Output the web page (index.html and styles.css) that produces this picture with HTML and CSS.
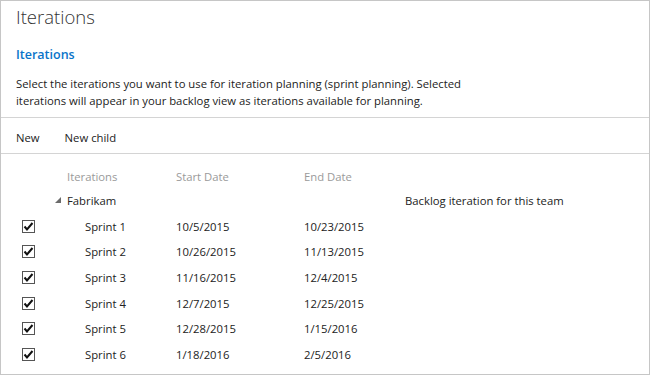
FILE: index.html
```html
<!DOCTYPE html>
<html lang="en">
<head>
    <meta charset="UTF-8">
    <title>Iterations</title>
    <link rel="stylesheet" href="styles.css">
</head>
<body>
    <div class="frame">
        <div class="head">
            <h1 class="title">Iterations</h1>
            <h2 class="subtitle">Iterations</h2>
            <p class="intro">Select the iterations you want to use for iteration planning (sprint planning). Selected<br>iterations will appear in your backlog view as iterations available for planning.</p>
        </div>

        <!-- toolbar -->
        <div class="toolbar">
            <span class="tool">New</span>
            <span class="tool">New child</span>
        </div>

        <div class="grid">
            <div class="row row-header">
                <span class="cell check"></span>
                <span class="cell name">Iterations</span>
                <span class="cell start">Start Date</span>
                <span class="cell end">End Date</span>
            </div>
            <div class="row row-root">
                <span class="cell check"></span>
                <span class="cell name root-name">
                    <svg class="expander" width="7" height="7" viewBox="0 0 7 7"><polygon points="6,0 6,6 0,6" fill="#6b6b6b"/></svg>
                    Fabrikam
                </span>
                <span class="cell start"></span>
                <span class="cell end"></span>
                <span class="cell note">Backlog iteration for this team</span>
            </div>
            <div class="row">
                <span class="cell check"><svg class="box" width="13" height="13" viewBox="0 0 13 13"><rect x="0.5" y="0.5" width="12" height="12" fill="#fff" stroke="#555"/><path d="M2.5 6.5 L5 9.5 L10.5 3" fill="none" stroke="#111" stroke-width="2"/></svg></span>
                <span class="cell name child">Sprint 1</span>
                <span class="cell start">10/5/2015</span>
                <span class="cell end">10/23/2015</span>
            </div>
            <div class="row">
                <span class="cell check"><svg class="box" width="13" height="13" viewBox="0 0 13 13"><rect x="0.5" y="0.5" width="12" height="12" fill="#fff" stroke="#555"/><path d="M2.5 6.5 L5 9.5 L10.5 3" fill="none" stroke="#111" stroke-width="2"/></svg></span>
                <span class="cell name child">Sprint 2</span>
                <span class="cell start">10/26/2015</span>
                <span class="cell end">11/13/2015</span>
            </div>
            <div class="row">
                <span class="cell check"><svg class="box" width="13" height="13" viewBox="0 0 13 13"><rect x="0.5" y="0.5" width="12" height="12" fill="#fff" stroke="#555"/><path d="M2.5 6.5 L5 9.5 L10.5 3" fill="none" stroke="#111" stroke-width="2"/></svg></span>
                <span class="cell name child">Sprint 3</span>
                <span class="cell start">11/16/2015</span>
                <span class="cell end">12/4/2015</span>
            </div>
            <div class="row">
                <span class="cell check"><svg class="box" width="13" height="13" viewBox="0 0 13 13"><rect x="0.5" y="0.5" width="12" height="12" fill="#fff" stroke="#555"/><path d="M2.5 6.5 L5 9.5 L10.5 3" fill="none" stroke="#111" stroke-width="2"/></svg></span>
                <span class="cell name child">Sprint 4</span>
                <span class="cell start">12/7/2015</span>
                <span class="cell end">12/25/2015</span>
            </div>
            <div class="row">
                <span class="cell check"><svg class="box" width="13" height="13" viewBox="0 0 13 13"><rect x="0.5" y="0.5" width="12" height="12" fill="#fff" stroke="#555"/><path d="M2.5 6.5 L5 9.5 L10.5 3" fill="none" stroke="#111" stroke-width="2"/></svg></span>
                <span class="cell name child">Sprint 5</span>
                <span class="cell start">12/28/2015</span>
                <span class="cell end">1/15/2016</span>
            </div>
            <div class="row">
                <span class="cell check"><svg class="box" width="13" height="13" viewBox="0 0 13 13"><rect x="0.5" y="0.5" width="12" height="12" fill="#fff" stroke="#555"/><path d="M2.5 6.5 L5 9.5 L10.5 3" fill="none" stroke="#111" stroke-width="2"/></svg></span>
                <span class="cell name child">Sprint 6</span>
                <span class="cell start">1/18/2016</span>
                <span class="cell end">2/5/2016</span>
            </div>
        </div>
    </div>
</body>
</html>
```

FILE: styles.css
```css
*{
    margin: 0;
    padding: 0;
    box-sizing: border-box;
}
body{
    background-color: #ffffff;
    font-family: "Open Sans", "Noto Sans", sans-serif;
    font-size: 11.3px;
    color: #222222;
}
.frame{
    width: 650px;
    height: 375px;
    border: 1px solid #c6c6c6;
    overflow: hidden;
}
.head{
    padding: 0 15px;
}
.title{
    font-size: 18.5px;
    font-weight: 300;
    color: #333333;
    line-height: 30px;
    padding-top: 1px;
}
.subtitle{
    font-size: 12.5px;
    font-weight: 600;
    color: #0a74c9;
    line-height: 18px;
    margin-top: 14px;
}
.intro{
    line-height: 17px;
    margin-top: 11px;
}
.toolbar{
    margin-top: 8px;
    border-top: 1px solid #d4d4d4;
    border-bottom: 1px solid #d4d4d4;
    height: 37px;
    display: flex;
    align-items: center;
    padding: 3px 15px 0 15px;
    gap: 25px;
}
.grid{
    padding-top: 10px;
}
.row{
    display: flex;
    align-items: center;
    height: 25.6px;
}
.row-header{
    color: #9a9a9a;
    height: 24px;
}
.check{
    width: 66px;
    padding-left: 21px;
    display: flex;
    align-items: center;
}
.name{
    width: 109px;
}
.child{
    padding-left: 18px;
}
.root-name{
    display: flex;
    align-items: center;
    gap: 5px;
    width: 121px;
    margin-left: -12px;
}
.start{
    width: 128px;
}
.end{
    width: 101px;
}
```
